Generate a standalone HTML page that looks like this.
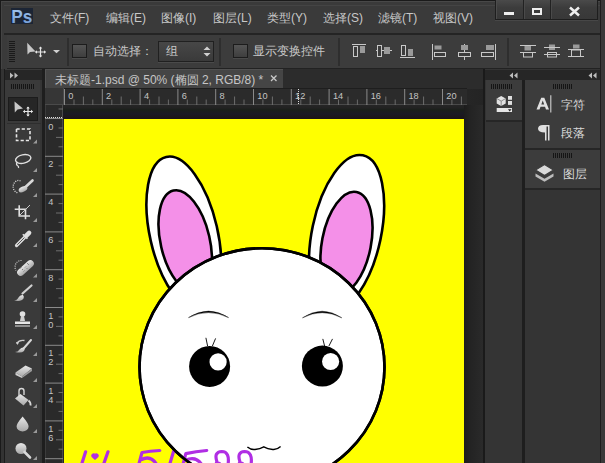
<!DOCTYPE html>
<html><head><meta charset="utf-8">
<style>
*{margin:0;padding:0;box-sizing:border-box}
html,body{width:605px;height:463px;overflow:hidden;background:#2a2a2a;font-family:"Liberation Sans",sans-serif;}
.a{position:absolute}
.t{position:absolute;color:#c8c8c8;font-size:12px;line-height:14px;white-space:nowrap}
.grip{position:absolute;height:5px;background:repeating-linear-gradient(90deg,#151515 0 1px,transparent 1px 2px)}
</style></head><body>
<!-- frame -->
<div class="a" style="left:0;top:0;width:605px;height:463px;background:#1a1a1a"></div>
<div class="a" style="left:1px;top:1px;width:604px;height:462px;background:#3a3a3a;border-left:1px solid #444;border-top:1px solid #484848"></div>
<div class="a" style="left:4px;top:5px;width:596px;height:1px;background:#444"></div>
<div class="a" style="left:1px;top:69px;width:3px;height:394px;background:#333"></div>

<!-- MENU BAR -->
<div class="a" style="left:11px;top:8px;width:22px;height:16px;background:#1c2535"></div>
<svg class="a" style="left:11px;top:7px" width="22" height="18"><defs><linearGradient id="psg" x1="0" y1="0" x2="0" y2="1"><stop offset="0" stop-color="#a4c6ee"/><stop offset="1" stop-color="#6c98d4"/></linearGradient></defs>
<text x="0.3" y="16" font-family="Liberation Sans" font-weight="bold" font-size="18" fill="url(#psg)" textLength="21" lengthAdjust="spacingAndGlyphs">Ps</text></svg>
<div class="t" style="left:50px;top:11px">文件(F)</div>
<div class="t" style="left:106px;top:11px">编辑(E)</div>
<div class="t" style="left:161px;top:11px">图像(I)</div>
<div class="t" style="left:213px;top:11px">图层(L)</div>
<div class="t" style="left:267px;top:11px">类型(Y)</div>
<div class="t" style="left:323px;top:11px">选择(S)</div>
<div class="t" style="left:378px;top:11px">滤镜(T)</div>
<div class="t" style="left:433px;top:11px">视图(V)</div>
<!-- window buttons -->
<div class="a" style="left:495px;top:0;width:103px;height:20px;background:linear-gradient(#4a4a4a,#3c3c3c 40%,#383838);border:1px solid #1e1e1e;border-top:none;box-shadow:inset 1px 0 0 #4c4c4c,0 1px 0 #474747"></div>
<div class="a" style="left:523px;top:0;width:1px;height:19px;background:#222;box-shadow:1px 0 0 #4a4a4a"></div>
<div class="a" style="left:550px;top:0;width:1px;height:19px;background:#222;box-shadow:1px 0 0 #4a4a4a"></div>
<div class="a" style="left:504px;top:12px;width:10px;height:3px;background:#eee"></div>
<div class="a" style="left:532px;top:8px;width:10px;height:7px;border:2px solid #eee"></div>
<svg class="a" style="left:566px;top:5px" width="16" height="12"><path d="M4 2.5L13 10.5M13 2.5L4 10.5" stroke="#eee" stroke-width="2.5"/></svg>

<div class="a" style="left:4px;top:33px;width:596px;height:2px;background:#242424"></div>

<!-- OPTIONS BAR -->
<div class="a" style="left:7px;top:35px;width:593px;height:35px;background:#3c3c3c;border-bottom:2px solid #222"></div>

<!-- options contents -->
<div class="a" style="left:9px;top:41px;width:6px;height:22px;background:repeating-linear-gradient(180deg,#1a1a1a 0 1px,transparent 1px 2px)"></div>
<svg class="a" style="left:26px;top:40px" width="40" height="20">
<path d="M1.2 2.8L1.5 14.5L4 12L9.5 11.5Z" fill="#c8c8c8"/>
<path d="M9.5 12H19.5M14.5 7V17" stroke="#e6e6e6" stroke-width="1.2"/>
<path d="M9 12l2 -1.8v3.6zM20 12l-2 -1.8v3.6zM14.5 6.5l-1.8 2h3.6zM14.5 17.5l-1.8 -2h3.6z" fill="#e6e6e6"/>
<path d="M27 10h7l-3.5 3.2z" fill="#d0d0d0"/>
</svg>
<div class="a" style="left:67px;top:38px;width:2px;height:28px;background:#2e2e2e"></div>
<div class="a" style="left:72px;top:44px;width:15px;height:14px;background:linear-gradient(#545454,#3e3e3e);border:1px solid #1c1c1c;box-shadow:0 1px 0 #4a4a4a"></div>
<div class="t" style="left:93px;top:44px">自动选择：</div>
<div class="a" style="left:158px;top:41px;width:56px;height:21px;background:linear-gradient(#474747,#3a3a3a);border:1px solid #202020;box-shadow:0 1px 0 #4a4a4a"></div>
<div class="t" style="left:166px;top:44px">组</div>
<svg class="a" style="left:203px;top:46px" width="8" height="11"><path d="M4 0.5L7.5 4H0.5ZM4 10.5L7.5 7H0.5Z" fill="#cfcfcf"/></svg>
<div class="a" style="left:219px;top:38px;width:2px;height:28px;background:#2e2e2e"></div>
<div class="a" style="left:233px;top:44px;width:15px;height:14px;background:linear-gradient(#545454,#3e3e3e);border:1px solid #1c1c1c;box-shadow:0 1px 0 #4a4a4a"></div>
<div class="t" style="left:253px;top:44px">显示变换控件</div>
<div class="a" style="left:338px;top:38px;width:2px;height:28px;background:#2e2e2e"></div>
<svg class="a" style="left:350px;top:40px" width="250" height="24" fill="none" stroke="#c8c8c8" stroke-width="1">
 <!-- align top -->
 <path d="M2 4.5H16"/><rect x="3.5" y="6.5" width="4" height="10"/><rect x="10" y="6" width="5" height="7" fill="#9a9a9a" stroke="none"/>
 <!-- align vcenter -->
 <path d="M26 10.5H42"/><rect x="27.5" y="5.5" width="4" height="11" fill="#3c3c3c"/><rect x="34" y="7" width="6" height="7" fill="#9a9a9a" stroke="none"/>
 <!-- align bottom -->
 <path d="M50 17.5H65"/><rect x="51.5" y="5.5" width="4" height="10"/><rect x="58" y="9" width="5" height="7" fill="#9a9a9a" stroke="none"/>
 <!-- align left -->
 <path d="M82.5 4V20"/><rect x="84.5" y="5.5" width="7" height="4" fill="#9a9a9a" stroke="none"/><rect x="84.5" y="12.5" width="11" height="4"/>
 <!-- align hcenter -->
 <path d="M114.5 4V20"/><rect x="111" y="5" width="7" height="5" fill="#9a9a9a" stroke="none"/><rect x="108.5" y="12.5" width="12" height="4" fill="#3c3c3c"/>
 <!-- align right -->
 <path d="M145.5 4V20"/><rect x="136" y="5" width="8" height="5" fill="#9a9a9a" stroke="none"/><rect x="131.5" y="12.5" width="12" height="4"/>
</svg>
<div class="a" style="left:507px;top:38px;width:2px;height:28px;background:#2e2e2e"></div>
<svg class="a" style="left:518px;top:40px" width="70" height="24" fill="none" stroke="#c8c8c8" stroke-width="1">
 <rect x="6.5" y="6" width="6.5" height="4.5" fill="#9a9a9a" stroke="none"/><path d="M2 5.5H18M2 12.5H18"/><rect x="5.5" y="12.5" width="9" height="4.5"/>
 <rect x="31" y="4.5" width="6" height="5.5" fill="#9a9a9a" stroke="none"/><path d="M26 7.5H42M26 14.5H42"/><rect x="29.5" y="12.5" width="9" height="4.5"/>
 <rect x="55" y="4.5" width="6.5" height="4" fill="#9a9a9a" stroke="none"/><path d="M50 9.5H66M50 16.5H66"/><rect x="53.5" y="10" width="9" height="6.5"/>
</svg>

<!-- TOOLS PANEL -->
<div class="a" style="left:4px;top:69px;width:41px;height:394px;background:#3a3a3a;border-left:1px solid #1c1c1c;border-right:3px solid #1e1e1e"></div><div class="a" style="left:40px;top:80px;width:2px;height:383px;background:#353535"></div>
<div class="a" style="left:5px;top:70px;width:37px;height:10px;background:#262626"></div>
<svg class="a" style="left:10px;top:72px" width="12" height="7"><path d="M0 0.5L3.5 3.5L0 6.5ZM4.5 0.5L8 3.5L4.5 6.5Z" fill="#bdbdbd"/></svg>
<div class="grip" style="left:11px;top:84px;width:23px"></div>
<div class="a" style="left:8px;top:97px;width:30px;height:24px;background:#262626;border:1px solid #1c1c1c"></div>
<div class="a" style="left:7px;top:123px;width:34px;height:1px;background:#2e2e2e"></div>



<!-- tool icons -->
<svg class="a" style="left:0;top:0" width="45" height="463">
 <defs>
  <linearGradient id="tg" x1="0" y1="0" x2="0" y2="1"><stop offset="0" stop-color="#e8e8e8"/><stop offset="1" stop-color="#a8a8a8"/></linearGradient>
 </defs>
 <g fill="#9a9a9a">
  <path d="M33 143.5h4v-4z"/><path d="M33 172h4v-4z"/><path d="M33 197h4v-4z"/><path d="M33 222h4v-4z"/><path d="M33 247h4v-4z"/>
  <path d="M33 277.5h4v-4z"/><path d="M33 302h4v-4z"/><path d="M33 329h4v-4z"/><path d="M33 356h4v-4z"/><path d="M33 382h4v-4z"/>
  <path d="M33 408h4v-4z"/><path d="M33 433h4v-4z"/><path d="M33 460h4v-4z"/>
 </g>
 <!-- move -->
 <path d="M14.5 101.5L14.8 112.5L17.5 109.5L23 108.5Z" fill="#c8c8c8"/>
 <path d="M23.5 111.5H32.5M28 107V116" stroke="#e8e8e8" stroke-width="1.2"/>
 <path d="M23 111.5l2 -1.8v3.6zM33 111.5l-2 -1.8v3.6zM28 106.5l-1.8 2h3.6zM28 116.5l-1.8 -2h3.6z" fill="#e8e8e8"/>
 <!-- marquee -->
 <rect x="16.5" y="129" width="13.5" height="11.5" fill="none" stroke="#e6e6e6" stroke-width="1.6" stroke-dasharray="3.2 2"/>
 <!-- lasso -->
 <ellipse cx="23.2" cy="159" rx="7.8" ry="4.2" transform="rotate(-12 23.2 159)" fill="none" stroke="#e0e0e0" stroke-width="1.4"/>
 <path d="M17.5 162q-2 2 0 3.5q1.5 1 1 2.5" fill="none" stroke="#e0e0e0" stroke-width="1.3"/>
 <!-- quick selection -->
 <path d="M20.5 180.8a5.5 6.2 0 1 0 -2.5 12" fill="none" stroke="#e0e0e0" stroke-width="1.3" stroke-dasharray="1 1.2"/>
 <path d="M25 187.5L32.5 180.5" stroke="#d8d8d8" stroke-width="2.6" stroke-linecap="round"/>
 <ellipse cx="23" cy="189.2" rx="4.6" ry="2.6" transform="rotate(-25 23 189.2)" fill="url(#tg)"/>
 <!-- crop -->
 <path d="M14.7 209.2H25.5V219.3M19.2 205.3V216H30" fill="none" stroke="#e0e0e0" stroke-width="1.6"/>
 <path d="M19.5 215.5L30 205" stroke="#c8c8c8" stroke-width="1"/>
 <!-- eyedropper -->
 <path d="M16.5 245.5L25 237" stroke="#dcdcdc" stroke-width="3.2" stroke-linecap="round"/>
 <path d="M17.2 244.8L24.5 237.5" stroke="#555" stroke-width="1"/>
 <path d="M24 234.8l3.5 -3.5a2.2 2.2 0 0 1 3.2 3.2l-3.5 3.5z" fill="#e0e0e0"/>
 <path d="M22.8 234.2l4.6 4.6" stroke="#e0e0e0" stroke-width="1.6"/>
 <!-- healing -->
 <path d="M21.5 260.5a6 6.5 0 0 0 -5.5 10" fill="none" stroke="#d0d0d0" stroke-width="1.2" stroke-dasharray="1 1.2"/>
 <rect x="15.5" y="264.5" width="20" height="7" rx="3.5" transform="rotate(-42 25.5 268)" fill="url(#tg)"/>
 <path d="M22 270l1 -1M25 267.5l1 -1M28 265l1 -1M23.5 271.5l1 -1M26.5 269l1 -1M20.5 268.5l1 -1M27 264l1 -1" stroke="#7a7a7a" stroke-width="0.9"/>
 <!-- brush -->
 <path d="M22.5 293.5L31.5 285.5" stroke="#d0d0d0" stroke-width="2.2" stroke-linecap="round"/>
 <path d="M14 300.5q3 0 4.5 -3q1.5 -3 4.5 -2.5q1.5 1.5 0.5 3.5q-2 3.5 -9.5 2z" fill="url(#tg)"/>
 <!-- stamp -->
 <circle cx="22.5" cy="314" r="2.8" fill="#e0e0e0"/>
 <path d="M21 316h3l1 5h-5z" fill="#d0d0d0"/>
 <path d="M15 321.5h15v2.5h-15z" fill="#e6e6e6"/>
 <path d="M15 326h15" stroke="#c8c8c8" stroke-width="1.2"/>
 <!-- history brush -->
 <path d="M16.5 343.5q3 -4 8 -3" fill="none" stroke="#d0d0d0" stroke-width="1.3"/>
 <path d="M16 342l1.5 3l1.5 -2.5z" fill="#d0d0d0"/>
 <path d="M24 348L31 340" stroke="#d8d8d8" stroke-width="2" stroke-linecap="round"/>
 <path d="M15 352q3 0 4.5 -2.5q2 -2.5 4.5 -2q1.5 1.5 0 3.5q-2.5 2.5 -9 1z" fill="url(#tg)"/>
 <!-- eraser -->
 <path d="M15.5 372.5L25.5 365.5L32 368.5L22 376.5Z" fill="url(#tg)"/>
 <path d="M15.5 372.5L22 376.5V378L15.5 375Z" fill="#cfcfcf"/>
 <path d="M22 376.5L32 368.5V371L22 378Z" fill="#9a9a9a"/>
 <!-- paint bucket -->
 <path d="M19 396v-5a2.5 2.5 0 0 1 5 0v4" fill="none" stroke="#d8d8d8" stroke-width="1.4"/>
 <path d="M15 398.5l5.5 -4.5l8 6l-5 5.5z" fill="url(#tg)"/>
 <path d="M28.5 400.5q2.5 2 2 5" fill="none" stroke="#d8d8d8" stroke-width="1.8"/>
 <!-- blur drop -->
 <path d="M22.6 416.5q-6 7 -6 10a6 5 0 0 0 12 0q0 -3 -6 -10z" fill="url(#tg)"/>
 <!-- dodge -->
 <circle cx="21" cy="448.5" r="5.5" fill="url(#tg)"/>
 <path d="M24.5 452L30 457.5" stroke="#d8d8d8" stroke-width="2.6" stroke-linecap="round"/>
</svg>

<!-- DOCUMENT AREA -->
<div class="a" style="left:45px;top:69px;width:438px;height:394px;background:#2c2c2c"></div>
<div class="a" style="left:45px;top:69px;width:238px;height:20px;background:#454545;border-left:1px solid #555;border-top:1px solid #505050"></div>
<div class="t" style="left:55px;top:72.5px;color:#c6c6c6">未标题-1.psd @ 50% (椭圆 2, RGB/8) *</div>
<svg class="a" style="left:269px;top:74px" width="10" height="9"><path d="M2 1.5L7.5 7M7.5 1.5L2 7" stroke="#c8c8c8" stroke-width="1.3"/></svg>
<!-- rulers -->
<div class="a" style="left:45px;top:88px;width:422px;height:17px;background:#2b2b2b;border-top:1px solid #1e1e1e;border-bottom:1px solid #4a4a4a"></div>
<div class="a" style="left:45px;top:105px;width:18px;height:358px;background:#2a2a2a;border-right:1px solid #4a4a4a;border-left:1px solid #3c3c3c"></div>
<div class="a" style="left:45px;top:88px;width:19px;height:17px;background:#363636;border-right:1px solid #4a4a4a;border-bottom:1px solid #4a4a4a"></div>
<svg class="a" style="left:45px;top:88px" width="422" height="17" font-family="Liberation Sans" font-size="9.2" fill="#c4c4c4"><path d="M19.5 1V17" stroke="#8a8a8a"/><text x="23.3" y="10.8">0</text><path d="M29.0 11.5V17" stroke="#6a6a6a"/><path d="M38.4 8.5V17" stroke="#6e6e6e"/><path d="M47.8 11.5V17" stroke="#6a6a6a"/><path d="M57.3 1V17" stroke="#8a8a8a"/><text x="61.1" y="10.8">2</text><path d="M66.8 11.5V17" stroke="#6a6a6a"/><path d="M76.2 8.5V17" stroke="#6e6e6e"/><path d="M85.6 11.5V17" stroke="#6a6a6a"/><path d="M95.1 1V17" stroke="#8a8a8a"/><text x="98.9" y="10.8">4</text><path d="M104.6 11.5V17" stroke="#6a6a6a"/><path d="M114.0 8.5V17" stroke="#6e6e6e"/><path d="M123.4 11.5V17" stroke="#6a6a6a"/><path d="M132.9 1V17" stroke="#8a8a8a"/><text x="136.7" y="10.8">6</text><path d="M142.3 11.5V17" stroke="#6a6a6a"/><path d="M151.8 8.5V17" stroke="#6e6e6e"/><path d="M161.2 11.5V17" stroke="#6a6a6a"/><path d="M170.7 1V17" stroke="#8a8a8a"/><text x="174.5" y="10.8">8</text><path d="M180.1 11.5V17" stroke="#6a6a6a"/><path d="M189.6 8.5V17" stroke="#6e6e6e"/><path d="M199.0 11.5V17" stroke="#6a6a6a"/><path d="M208.5 1V17" stroke="#8a8a8a"/><text x="212.3" y="10.8">10</text><path d="M217.9 11.5V17" stroke="#6a6a6a"/><path d="M227.4 8.5V17" stroke="#6e6e6e"/><path d="M236.9 11.5V17" stroke="#6a6a6a"/><path d="M246.3 1V17" stroke="#8a8a8a"/><text x="250.1" y="10.8">12</text><path d="M255.8 11.5V17" stroke="#6a6a6a"/><path d="M265.2 8.5V17" stroke="#6e6e6e"/><path d="M274.6 11.5V17" stroke="#6a6a6a"/><path d="M284.1 1V17" stroke="#8a8a8a"/><text x="287.9" y="10.8">14</text><path d="M293.5 11.5V17" stroke="#6a6a6a"/><path d="M303.0 8.5V17" stroke="#6e6e6e"/><path d="M312.4 11.5V17" stroke="#6a6a6a"/><path d="M321.9 1V17" stroke="#8a8a8a"/><text x="325.7" y="10.8">16</text><path d="M331.3 11.5V17" stroke="#6a6a6a"/><path d="M340.8 8.5V17" stroke="#6e6e6e"/><path d="M350.2 11.5V17" stroke="#6a6a6a"/><path d="M359.7 1V17" stroke="#8a8a8a"/><text x="363.5" y="10.8">18</text><path d="M369.1 11.5V17" stroke="#6a6a6a"/><path d="M378.6 8.5V17" stroke="#6e6e6e"/><path d="M388.0 11.5V17" stroke="#6a6a6a"/><path d="M397.5 1V17" stroke="#8a8a8a"/><text x="401.3" y="10.8">20</text><path d="M406.9 11.5V17" stroke="#6a6a6a"/><path d="M416.4 8.5V17" stroke="#6e6e6e"/></svg><svg class="a" style="left:45px;top:105px" width="18" height="358" font-family="Liberation Sans" font-size="9.2" fill="#c4c4c4"><path d="M13.5 4.0H18" stroke="#6a6a6a"/><path d="M0 13.5H18" stroke="#8a8a8a"/><text x="3.3" y="24.5">0</text><path d="M13.5 23.0H18" stroke="#6a6a6a"/><path d="M11 32.4H18" stroke="#6e6e6e"/><path d="M13.5 41.8H18" stroke="#6a6a6a"/><path d="M0 51.3H18" stroke="#8a8a8a"/><text x="3.3" y="62.3">2</text><path d="M13.5 60.8H18" stroke="#6a6a6a"/><path d="M11 70.2H18" stroke="#6e6e6e"/><path d="M13.5 79.6H18" stroke="#6a6a6a"/><path d="M0 89.1H18" stroke="#8a8a8a"/><text x="3.3" y="100.1">4</text><path d="M13.5 98.6H18" stroke="#6a6a6a"/><path d="M11 108.0H18" stroke="#6e6e6e"/><path d="M13.5 117.4H18" stroke="#6a6a6a"/><path d="M0 126.9H18" stroke="#8a8a8a"/><text x="3.3" y="137.9">6</text><path d="M13.5 136.3H18" stroke="#6a6a6a"/><path d="M11 145.8H18" stroke="#6e6e6e"/><path d="M13.5 155.2H18" stroke="#6a6a6a"/><path d="M0 164.7H18" stroke="#8a8a8a"/><text x="3.3" y="175.7">8</text><path d="M13.5 174.1H18" stroke="#6a6a6a"/><path d="M11 183.6H18" stroke="#6e6e6e"/><path d="M13.5 193.0H18" stroke="#6a6a6a"/><path d="M0 202.5H18" stroke="#8a8a8a"/><text x="3.3" y="213.5">1</text><text x="3.3" y="222.5">0</text><path d="M13.5 211.9H18" stroke="#6a6a6a"/><path d="M11 221.4H18" stroke="#6e6e6e"/><path d="M13.5 230.9H18" stroke="#6a6a6a"/><path d="M0 240.3H18" stroke="#8a8a8a"/><text x="3.3" y="251.3">1</text><text x="3.3" y="260.3">2</text><path d="M13.5 249.8H18" stroke="#6a6a6a"/><path d="M11 259.2H18" stroke="#6e6e6e"/><path d="M13.5 268.6H18" stroke="#6a6a6a"/><path d="M0 278.1H18" stroke="#8a8a8a"/><text x="3.3" y="289.1">1</text><text x="3.3" y="298.1">4</text><path d="M13.5 287.5H18" stroke="#6a6a6a"/><path d="M11 297.0H18" stroke="#6e6e6e"/><path d="M13.5 306.4H18" stroke="#6a6a6a"/><path d="M0 315.9H18" stroke="#8a8a8a"/><text x="3.3" y="326.9">1</text><text x="3.3" y="335.9">6</text><path d="M13.5 325.3H18" stroke="#6a6a6a"/><path d="M11 334.8H18" stroke="#6e6e6e"/><path d="M13.5 344.2H18" stroke="#6a6a6a"/><path d="M0 353.7H18" stroke="#8a8a8a"/><text x="3.3" y="364.7">1</text><text x="3.3" y="373.7">8</text></svg>
<!-- pasteboard -->
<div class="a" style="left:63px;top:106px;width:402px;height:357px;background:#262626"></div>
<div class="a" style="left:63px;top:105px;width:402px;height:14px;background:linear-gradient(#262626 0,#222 3px,#1a1f1a 5px,#1a1a24 9px,#1c1616 13px)"></div>
<div class="a" style="left:464px;top:105px;width:19px;height:358px;background:linear-gradient(90deg,#1c1c1c,#232323 6px,#2a2a2a)"></div><div class="a" style="left:467px;top:89px;width:16px;height:16px;background:linear-gradient(90deg,#262626,#242424)"></div>
<div class="a" style="left:483px;top:69px;width:2px;height:394px;background:#1a1a1a"></div>
<!-- canvas -->
<div class="a" style="left:64px;top:119px;width:400px;height:344px;background:#ffff00;overflow:hidden">
<svg width="400" height="344" style="position:absolute;left:0;top:0">
 <g transform="translate(-64,-119)" stroke="#000" stroke-width="2.6">
  <ellipse cx="183.8" cy="233.8" rx="33.8" ry="78.8" transform="rotate(-12.9 183.8 233.8)" fill="#fff"/>
  <ellipse cx="185.2" cy="241.5" rx="24.6" ry="52.3" transform="rotate(-13 185.2 241.5)" fill="#f490e8"/>
  <ellipse cx="346.6" cy="232.8" rx="34.5" ry="79.2" transform="rotate(11.9 346.6 232.8)" fill="#fff"/>
  <ellipse cx="346.5" cy="243" rx="24.5" ry="52" transform="rotate(11 346.5 243)" fill="#f490e8"/>
  <ellipse cx="262" cy="367" rx="122.5" ry="118.8" fill="#fff"/>
  <circle cx="209.6" cy="366.4" r="20.5" fill="#000" stroke="none"/>
  <circle cx="218.1" cy="361.9" r="8.6" fill="#fff" stroke="none"/>
  <circle cx="322.4" cy="366.1" r="20.5" fill="#000" stroke="none"/>
  <circle cx="330.6" cy="361.5" r="8.6" fill="#fff" stroke="none"/>
  <path d="M188.5 317.6Q208.5 304.6 228.6 317.6Q208.5 307.6 188.5 317.6Z" fill="#000" stroke-width="0.4"/>
  <path d="M302.5 317.8Q322.2 304.6 341.8 317.8Q322.2 307.6 302.5 317.8Z" fill="#000" stroke-width="0.4"/>
  <path d="M207.6 346L205.9 337.8M212.4 346L215.6 338.4" fill="none" stroke-width="0.9"/>
  <path d="M324.6 346L322.8 338.9M328.9 346L332.5 338.9" fill="none" stroke-width="0.9"/>
  <path d="M247.4 447Q251 450 255 449.5Q260 449 263.8 446.8Q267.5 449 272.7 449.5Q277 450 280.6 446.6" fill="none" stroke-width="1.4"/>
 </g>
 <g transform="translate(-64,-119)" fill="none" stroke="#b02ee4" stroke-width="3.2" stroke-linecap="round" stroke-linejoin="round">
  <path d="M85.6 451.8L81.4 465"/>
  <path d="M95 459.2l-3 -2.6a1.9 1.9 0 0 1 3 -2.2a1.9 1.9 0 0 1 3 2.2z" fill="#b02ee4" stroke-width="1.2"/>
  <path d="M108 451.8L103.3 465"/>
  <path d="M159.8 450.5Q150 451 142 452.5L138.6 465M141 459.8Q151 454.5 157 465"/>
  <path d="M173.6 451.3L169.5 465"/>
  <path d="M206.7 450.5Q196 451.5 185.8 453.6L182.9 465M185.5 460.3Q196 455.5 202 465"/>
  <path d="M217 462Q213.5 451.8 221.8 451.5Q230 451.5 228 465M216.5 462.5L219.5 463.5"/>
  <path d="M240 462Q236.5 451.8 244.5 451.5Q253 451.5 251 465M239.5 462.5L242.5 463.5"/>
 </g>
 <ellipse transform="translate(-64,-119)" cx="262" cy="367" rx="122.5" ry="118.8" fill="none" stroke="#000" stroke-width="2.6"/>
</svg>
</div>
<div class="a" style="left:45px;top:117px;width:18px;height:1px;background:repeating-linear-gradient(90deg,#ddd 0 1px,transparent 1px 2px)"></div>
<div class="a" style="left:298px;top:89px;width:1px;height:16px;background:repeating-linear-gradient(180deg,#ddd 0 1px,transparent 1px 2px)"></div>

<!-- RIGHT PANELS -->
<div class="a" style="left:485px;top:69px;width:115px;height:394px;background:#343434"></div>
<div class="a" style="left:485px;top:70px;width:115px;height:10px;background:#262626"></div>
<svg class="a" style="left:509px;top:72px" width="10" height="7"><path d="M4 0.5L0.5 3.5L4 6.5ZM8.5 0.5L5 3.5L8.5 6.5Z" fill="#bdbdbd"/></svg>
<svg class="a" style="left:588px;top:72px" width="10" height="7"><path d="M4 0.5L0.5 3.5L4 6.5ZM8.5 0.5L5 3.5L8.5 6.5Z" fill="#bdbdbd"/></svg>
<div class="a" style="left:522px;top:80px;width:3px;height:383px;background:#1e1e1e"></div>
<!-- narrow panel box -->
<div class="a" style="left:486px;top:80px;width:36px;height:42px;background:#3c3c3c;border-bottom:2px solid #262626"></div>
<div class="grip" style="left:491px;top:84px;width:22px"></div>
<!-- wide panels -->
<div class="a" style="left:525px;top:80px;width:75px;height:70px;background:#3c3c3c;border-bottom:2px solid #262626"></div>
<div class="grip" style="left:553px;top:84px;width:20px"></div>
<div class="a" style="left:525px;top:150px;width:75px;height:40px;background:#3c3c3c;border-bottom:2px solid #262626"></div>
<div class="grip" style="left:553px;top:153px;width:20px"></div>
<div class="t" style="left:561px;top:98px;color:#d8d8d8">字符</div>
<div class="t" style="left:561px;top:126px;color:#d8d8d8">段落</div>
<div class="t" style="left:563px;top:167px;color:#d8d8d8">图层</div>

<svg class="a" style="left:485px;top:80px" width="115" height="110">
 <!-- 3D / properties icon -->
  <path d="M11.7 18.5l4.5 -2.6l4.5 2.6v5l-4.5 2.6l-4.5 -2.6z" fill="#e2e2e2"/>
  <path d="M11.7 18.5l4.5 2.6l4.5 -2.6M16.2 21.1v5" fill="none" stroke="#777" stroke-width="0.8"/>
  <rect x="23" y="16" width="4" height="3.8" fill="#e0e0e0"/>
  <rect x="23" y="21" width="4" height="3.9" fill="#e0e0e0"/>
  <rect x="11.7" y="28" width="15.3" height="4" fill="#e6e6e6"/>
  <path d="M23 29.2h3.5l-1.75 2.2z" fill="#222"/>
 <!-- A| -->
 <path d="M51.5 29.6L56.2 17.8H59.3L64 29.6H61L60 26.8H55.5L54.5 29.6ZM56.3 24.5H59.2L57.75 20.6Z" fill="#e0e0e0" fill-rule="evenodd"/>
 <path d="M65.8 15.3V32.5" stroke="#d0d0d0" stroke-width="1.1"/>
 <!-- pilcrow -->
 <path d="M58 45H64.5V60.5H63V46.5H61.5V60.5H60V52.5Q53 52.5 53 48.8Q53 45 58 45Z" fill="#e0e0e0"/>
 <!-- layers -->
 <path d="M50.5 93.5L59.5 98.8L68.5 93.5L68.5 96.5L59.5 101.8L50.5 96.5Z" fill="#bcbcbc"/>
 <path d="M59.5 84.6l9 5.5l-9 5.5l-9 -5.5z" fill="#dadada" stroke="#3c3c3c" stroke-width="1.2"/>
</svg>
<div class="a" style="left:600px;top:0;width:5px;height:463px;background:#3a3a3a;border-left:1px solid #1e1e1e"></div>

</body></html>
